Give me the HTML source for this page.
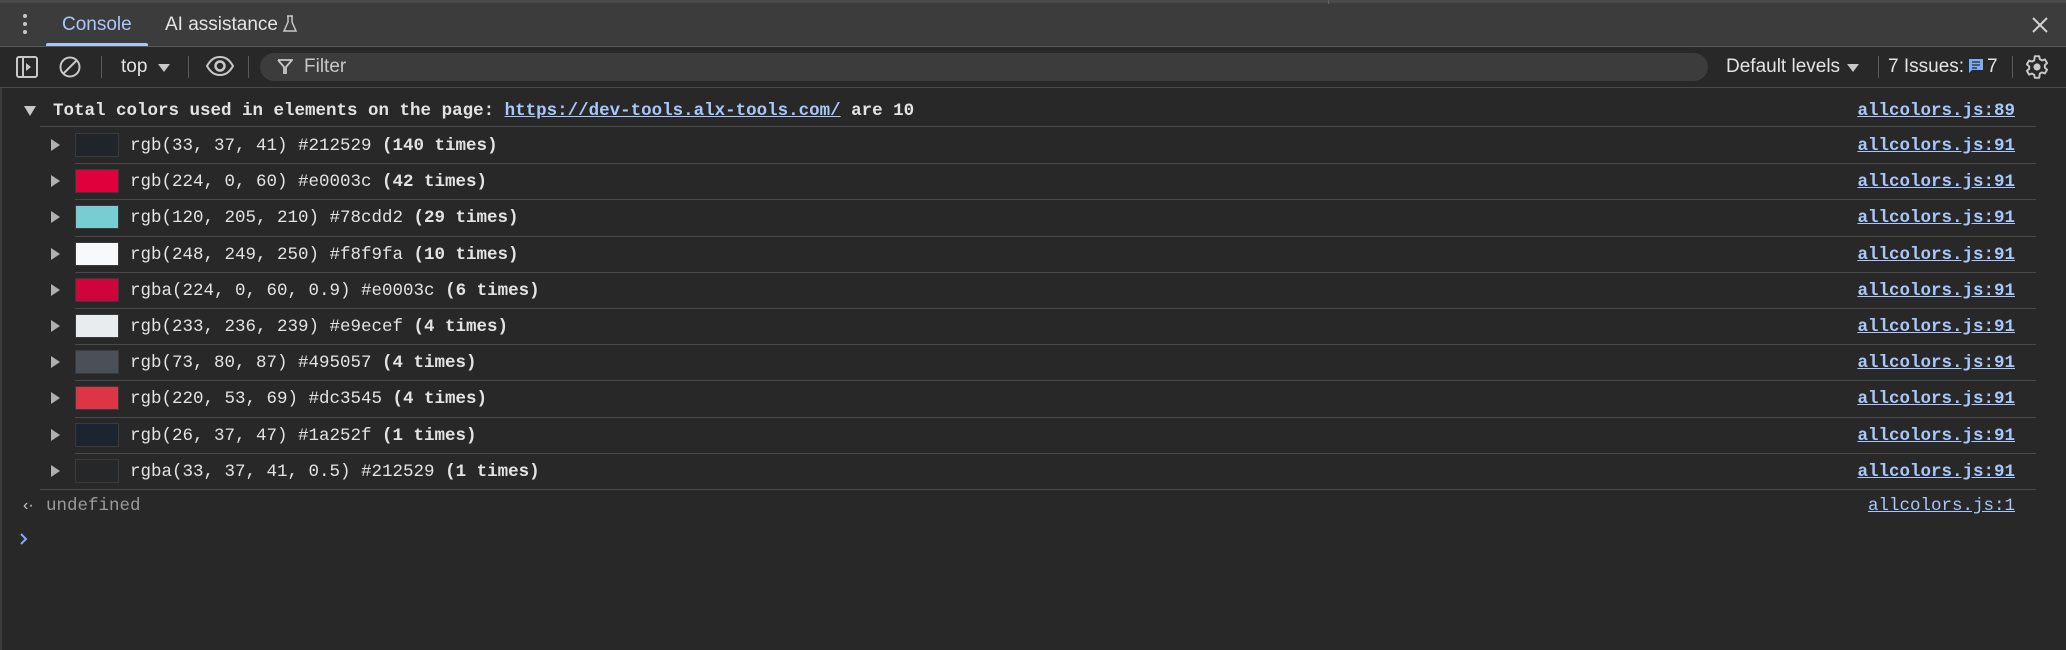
<!DOCTYPE html>
<html><head><meta charset="utf-8">
<style>
*{margin:0;padding:0;box-sizing:border-box}
body{width:2066px;height:650px;background:#282828;overflow:hidden;position:relative;font-family:"Liberation Sans",sans-serif;color:#e3e3e3}
.abs{position:absolute}
#tabs{left:0;top:0;width:2066px;height:47px;background:#3c3c3c;border-top:3px solid #4a4a4a;border-bottom:1px solid #5a5a5a}
#tool{left:0;top:47px;width:2066px;height:41px;background:#282828;border-bottom:1px solid #4a4a4a}
.t{font-size:19px;white-space:nowrap}
.mono{font-family:"Liberation Mono","DejaVu Sans Mono",monospace;font-size:17.5px;white-space:nowrap}
.link{color:#a8c7fa;text-decoration:underline}
.sep{position:absolute;height:1px;background:#4a4a4a;right:30px}
.sw{position:absolute;left:75px;width:44px;height:24px;border:1px solid #3a3a3a}
.tri{position:absolute;left:51px;width:0;height:0;border-top:6px solid transparent;border-bottom:6px solid transparent;border-left:9px solid #b0b0b0}
.vs{position:absolute;top:56px;width:1px;height:22px;background:#5a5a5a}
</style></head><body>
<div id="tabs" class="abs"></div>
<div class="abs" style="left:1328px;top:0;width:1px;height:4px;background:#666"></div>
<div class="abs" style="left:23px;top:14px;width:4px;height:4px;border-radius:2px;background:#c8c8c8"></div>
<div class="abs" style="left:23px;top:22px;width:4px;height:4px;border-radius:2px;background:#c8c8c8"></div>
<div class="abs" style="left:23px;top:30px;width:4px;height:4px;border-radius:2px;background:#c8c8c8"></div>
<div class="abs t" style="left:62px;top:14px;color:#a8c7fa">Console</div>
<div class="abs" style="left:46px;top:43px;width:102px;height:3px;background:#a8c7fa;border-radius:2px 2px 0 0"></div>
<div class="abs t" style="left:165px;top:14px;color:#e3e3e3">AI assistance</div>
<svg class="abs" style="left:282px;top:14px" width="16" height="20" viewBox="0 0 16 20"><path d="M5 2h6M6 2v6L2 17h12L10 8V2" fill="none" stroke="#c8c8c8" stroke-width="1.5"/></svg>
<svg class="abs" style="left:2031px;top:16px" width="18" height="18" viewBox="0 0 18 18"><path d="M2 2L16 16M16 2L2 16" stroke="#d0d0d0" stroke-width="2"/></svg>

<div id="tool" class="abs"></div>
<svg class="abs" style="left:15px;top:55px" width="24" height="24" viewBox="0 0 24 24"><rect x="2" y="2" width="20" height="20" rx="2" fill="none" stroke="#c8c8c8" stroke-width="2"/><path d="M8 2v20" stroke="#c8c8c8" stroke-width="2"/><path d="M11 8l5 4-5 4z" fill="#c8c8c8"/></svg>
<svg class="abs" style="left:58px;top:55px" width="24" height="24" viewBox="0 0 24 24"><circle cx="12" cy="12" r="9.5" fill="none" stroke="#c8c8c8" stroke-width="2"/><path d="M5 19L19 5" stroke="#c8c8c8" stroke-width="2"/></svg>
<div class="vs" style="left:101px"></div>
<div class="abs t" style="left:121px;top:56px">top</div>
<div class="abs" style="left:158px;top:64px;border-left:6px solid transparent;border-right:6px solid transparent;border-top:8px solid #c8c8c8"></div>
<div class="vs" style="left:188px"></div>
<svg class="abs" style="left:205px;top:54px" width="30" height="24" viewBox="0 0 30 24"><path d="M2 12C6 5 10 3 15 3s9 2 13 9c-4 7-8 9-13 9S6 19 2 12z" fill="none" stroke="#c8c8c8" stroke-width="2"/><circle cx="15" cy="12" r="4.5" fill="none" stroke="#c8c8c8" stroke-width="2.5"/></svg>
<div class="vs" style="left:248px"></div>
<div class="abs" style="left:260px;top:53px;width:1448px;height:28px;background:#3c3c3c;border-radius:14px"></div>
<svg class="abs" style="left:277px;top:58px" width="16" height="18" viewBox="0 0 16 18"><path d="M1 2h14L9 9v7M7 16V9L1 2" fill="none" stroke="#c8c8c8" stroke-width="1.8"/></svg>
<div class="abs t" style="left:304px;top:56px;color:#c8c8c8">Filter</div>
<div class="abs t" style="left:1726px;top:56px">Default levels</div>
<div class="abs" style="left:1847px;top:64px;border-left:6px solid transparent;border-right:6px solid transparent;border-top:8px solid #c8c8c8"></div>
<div class="vs" style="left:1878px"></div>
<div class="abs t" style="left:1888px;top:56px">7 Issues:</div>
<svg class="abs" style="left:1968px;top:58px" width="16" height="17" viewBox="0 0 16 17"><path d="M1 1h14v11H4l-3 3z" fill="#7cacf8"/><path d="M4 4h8M4 7h8M4 10h5" stroke="#282828" stroke-width="1.3"/></svg>
<div class="abs t" style="left:1987px;top:56px">7</div>
<div class="vs" style="left:2012px"></div>
<svg class="abs" style="left:2024px;top:54px" width="26" height="26" viewBox="0 0 24 24"><path d="M10 2h4l.6 2.8 2 1.1 2.7-.9 2 3.4-2.1 1.9v2.3l2.1 1.9-2 3.4-2.7-.9-2 1.1L14 22h-4l-.6-2.8-2-1.1-2.7.9-2-3.4 2.1-1.9v-2.3L2.7 9.5l2-3.4 2.7.9 2-1.1z" fill="none" stroke="#c8c8c8" stroke-width="1.8" stroke-linejoin="round"/><circle cx="12" cy="12" r="3.3" fill="#c8c8c8"/></svg>

<div class="abs" style="left:0;top:88px;width:2px;height:562px;background:#3c3c3c"></div>

<div class="abs" style="left:24px;top:106px;border-left:6px solid transparent;border-right:6px solid transparent;border-top:10px solid #c8c8c8"></div>
<div class="abs mono" style="left:53px;top:101px;font-weight:bold">Total colors used in elements on the page: <span class="link" style="color:#a8c7fa">https://dev-tools.alx-tools.com/</span> are 10</div>
<div class="abs mono link" style="right:51px;top:101px;font-weight:bold">allcolors.js:89</div>
<div class="sep" style="left:40px;top:126px"></div>

<div id="rows"></div>
<script>
(function(){
var d=[["#212529","rgb(33, 37, 41) #212529","140"],["#e0003c","rgb(224, 0, 60) #e0003c","42"],["#78cdd2","rgb(120, 205, 210) #78cdd2","29"],["#f8f9fa","rgb(248, 249, 250) #f8f9fa","10"],["rgba(224,0,60,0.9)","rgba(224, 0, 60, 0.9) #e0003c","6"],["#e9ecef","rgb(233, 236, 239) #e9ecef","4"],["#495057","rgb(73, 80, 87) #495057","4"],["#dc3545","rgb(220, 53, 69) #dc3545","4"],["#1a252f","rgb(26, 37, 47) #1a252f","1"],["rgba(33,37,41,0.5)","rgba(33, 37, 41, 0.5) #212529","1"]];
var h="";
for(var i=0;i<d.length;i++){var ty=127+i*36.2;var y=Math.round(ty);
h+='<div class="tri" style="top:'+(y+12)+'px"></div>';
h+='<div class="sw" style="top:'+(y+6)+'px;background:'+d[i][0]+'"></div>';
h+='<div class="abs mono" style="left:130px;top:'+(y+9)+'px">'+d[i][1]+' <b>('+d[i][2]+' times)</b></div>';
h+='<div class="abs mono link" style="right:51px;top:'+(y+9)+'px;font-weight:bold">allcolors.js:91</div>';
h+='<div class="sep" style="left:'+(i==d.length-1?40:75)+'px;top:'+Math.round(ty+36.2)+'px"></div>';}
document.getElementById("rows").innerHTML=h;
})();
</script>
<div class="abs" style="left:23px;top:497px;font-size:16px;color:#c8c8c8">‹·</div>
<div class="abs mono" style="left:46px;top:496px;color:#9a9a9a">undefined</div>
<div class="abs mono link" style="right:51px;top:496px">allcolors.js:1</div>
<svg class="abs" style="left:19px;top:532px" width="10" height="14" viewBox="0 0 10 14"><path d="M2 2l5 5-5 5" fill="none" stroke="#7cacf8" stroke-width="2"/></svg>
</body></html>
